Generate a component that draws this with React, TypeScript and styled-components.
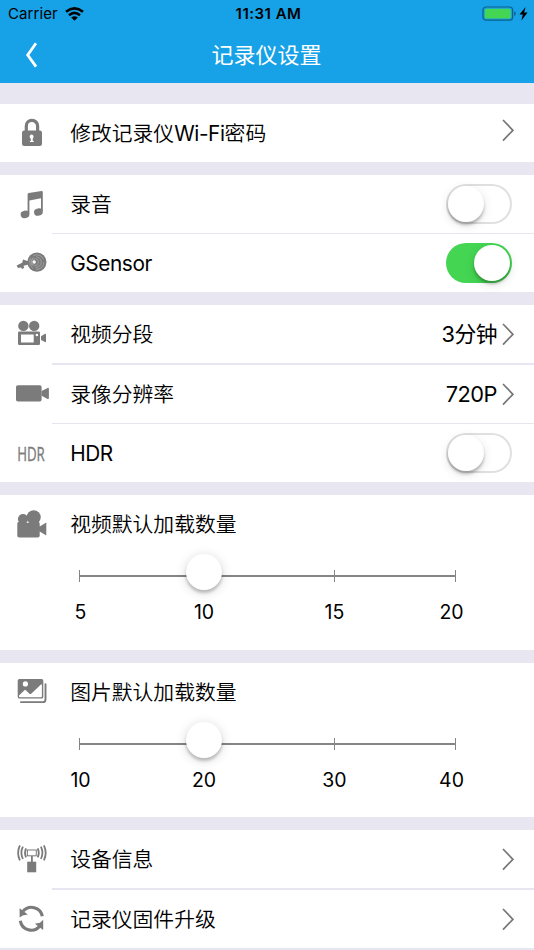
import React from 'react';
import styled, { createGlobalStyle } from 'styled-components';

const GlobalStyle = createGlobalStyle`
  * { box-sizing: border-box; }
  body {
    margin: 0;
    background: #e8e6f0;
    color: #000;
    font-family: Inter, "Noto Sans CJK SC", sans-serif;
    overflow: hidden;
  }
`;

const GRAY = '#7b7b7b';

const Screen = styled.main`
  width: 534px;
  height: 950px;
  overflow: hidden;
  display: flex;
  flex-direction: column;
`;

const Header = styled.header`
  flex: none;
  height: 83.4px;
  margin-bottom: 20.4px;
  background: #17a1e6;
`;

const StatusBar = styled.div`
  height: 27px;
  display: grid;
  grid-template-columns: 1fr auto 1fr;
  align-items: center;
  padding: 0 5px 0 8px;
  line-height: 27px;
`;

const Carrier = styled.div`
  display: flex;
  align-items: center;
  gap: 7px;
  font-size: 15px;
  letter-spacing: 0.1px;
`;

const Clock = styled.div`
  font-size: 15px;
  font-weight: 600;
  letter-spacing: 0.5px;
`;

const Power = styled.div`
  display: flex;
  justify-content: flex-end;
`;

const NavBar = styled.div`
  height: 56px;
  display: grid;
  grid-template-columns: 61px 1fr 62px;
  align-items: center;
`;

const BackButton = styled.button`
  border: 0;
  padding: 0 0 1px 24.5px;
  background: none;
  display: flex;
`;

const Title = styled.h1`
  margin: 0;
  text-align: center;
  color: #fff;
  font-size: 22px;
  line-height: 56px;
  font-weight: 400;
`;

const Group = styled.section<{ $height: number }>`
  flex: none;
  height: ${(p) => p.$height}px;
  margin-bottom: 12.8px;
  background: #fff;
  display: flex;
  flex-direction: column;
`;

const Row = styled.div`
  flex: 1;
  display: flex;
  align-items: center;
  padding-left: 14px;
`;

const Divider = styled.div`
  flex: none;
  height: 1.4px;
  margin-left: 52px;
  background: #e6e5f0;
`;

const IconSlot = styled.div`
  width: 36px;
  height: 36px;
  margin-right: 20.2px;
  display: flex;
  align-items: center;
  justify-content: center;
`;

const Label = styled.div<{ $tracking?: number }>`
  flex: 1;
  padding-top: 2px;
  font-size: 20.8px;
  line-height: 30px;
  letter-spacing: ${(p) => p.$tracking ?? 0}px;
  font-weight: 350;
  white-space: nowrap;
`;

const Latin = styled.span`
  font-weight: 400;
  letter-spacing: -0.4px;
`;

const Value = styled.div`
  font-size: 21.8px;
  line-height: 30px;
  letter-spacing: -0.5px;
  font-weight: 400;
  margin-right: 4px;
`;

const ChevronBox = styled.div<{ $lift?: number }>`
  display: flex;
  margin-right: 20px;
  padding-bottom: ${(p) => p.$lift ?? 0}px;
`;

const SwitchTrack = styled.div<{ $on?: boolean }>`
  width: 66px;
  height: 40px;
  margin-right: 22px;
  padding: 2px;
  border-radius: 20px;
  display: flex;
  justify-content: ${(p) => (p.$on ? 'flex-end' : 'flex-start')};
  background: ${(p) => (p.$on ? '#44d553' : '#fff')};
  box-shadow: ${(p) => (p.$on ? 'none' : 'inset 0 0 0 2px #e0e0e0')};
`;

const SwitchKnob = styled.div`
  width: 36px;
  height: 36px;
  border-radius: 50%;
  background: #fff;
  box-shadow: 0 3px 3px rgba(0, 0, 0, 0.24), 0 3px 11px rgba(0, 0, 0, 0.12);
`;

const SliderHeader = styled.div`
  height: 58.5px;
  display: flex;
  align-items: center;
  padding-left: 14px;
`;

const SliderTrack = styled.div`
  position: relative;
  width: 378px;
  height: 12px;
  margin: 16.8px 0 0 78.5px;
  display: grid;
  grid-template-columns: 125px 131px 121.5px;
`;

const TrackSegment = styled.div<{ $tick: boolean }>`
  border-right: ${(p) => (p.$tick ? `1.5px solid ${GRAY}` : '0')};
  background: linear-gradient(${GRAY}, ${GRAY}) 0 5px / 100% 2px no-repeat;
  opacity: 0.92;
  &:first-child { border-left: 1.5px solid ${GRAY}; }
`;

const SliderKnob = styled.div`
  position: absolute;
  left: 107.5px;
  top: -15.8px;
  width: 36px;
  height: 36px;
  border-radius: 50%;
  background: #fff;
  box-shadow: 0 3px 3px rgba(0, 0, 0, 0.2), 0 2px 12px rgba(0, 0, 0, 0.16);
`;

const Scale = styled.div`
  margin: 15px 0 0 20px;
  display: grid;
  grid-template-columns: 121px 126px 135px 99px;
  text-align: center;
  font-size: 19.5px;
  line-height: 30px;
`;

function Chevron({ lift }: { lift?: number }) {
  return (
    <ChevronBox $lift={lift}>
      <svg width="13" height="24" viewBox="0 0 13 24" fill="none" stroke="#777" strokeWidth="1.7">
        <path d="M2 2 11.9 12.3 2 22.6" />
      </svg>
    </ChevronBox>
  );
}

function Switch({ on }: { on?: boolean }) {
  return (
    <SwitchTrack $on={on} role="switch" aria-checked={!!on}>
      <SwitchKnob />
    </SwitchTrack>
  );
}

function Icon({ children }: { children: React.ReactNode }) {
  return (
    <IconSlot>
      <svg width="36" height="36" viewBox="0 0 36 36" fill={GRAY}>
        {children}
      </svg>
    </IconSlot>
  );
}

const LockIcon = () => (
  <Icon>
    <path d="M12.3 17V11a5.6 5.6 0 0 1 11.3 0V17" fill="none" stroke={GRAY} strokeWidth="3.2" />
    <rect x="8" y="15.4" width="20" height="15.6" rx="2.2" />
    <path d="M16 20.4a2 2 0 0 1 3.6 1.3c0 .8-.5 1.2-.8 1.6v2.6h1v1.2h-3.9v-1.2h.9v-2.4c-1.2-.8-1.4-2-.8-3.1Z" fill="#fff" />
  </Icon>
);

const MusicIcon = () => (
  <Icon>
    <path d="M13.6 8.3Q13.7 7.3 14.8 7L27.5 4.9Q28.8 4.8 28.8 6V25h-1.8V12.3L15.4 14.4V28h-1.8Z" />
    <ellipse cx="11" cy="28.4" rx="4.4" ry="3.7" transform="rotate(-12 11 28.4)" />
    <ellipse cx="24.4" cy="26" rx="4.4" ry="3.7" transform="rotate(-12 24.4 26)" />
  </Icon>
);

const SensorIcon = () => (
  <Icon>
    <circle cx="22.9" cy="17.1" r="9.6" />
    <g fill="none" stroke="#b5b5b5" strokeWidth=".6">
      <circle cx="22.7" cy="17.1" r="7.2" strokeDasharray="12 3" />
      <circle cx="22.1" cy="17.1" r="5.2" strokeDasharray="9 3" />
      <circle cx="21.1" cy="17.1" r="3.4" />
    </g>
    <circle cx="20.2" cy="17" r="1.7" fill="#fff" />
    <path d="M14.8 16.6 9 14.6 8.2 17.8 2.6 20.5 4 23l3-.6 1.1 1.5 2-1-.5-2.2 6-1.4Z" />
  </Icon>
);

const CineIcon = () => (
  <Icon>
    <circle cx="9.4" cy="9.9" r="5.2" />
    <circle cx="20.2" cy="9.9" r="5.2" />
    <path fillRule="evenodd" d="M5.3 15.6h19.4q1.3 0 1.3 1.3v10.8q0 1.3-1.3 1.3H5.3Q4 29 4 27.7V16.9q0-1.3 1.3-1.3ZM7 18.4v8.2h12.7v-8.2ZM21.6 19a1.3 1.3 0 1 0 2.6 0 1.3 1.3 0 0 0-2.6 0Z" />
    <path d="m27 20.2 4-2.5q1-.3 1 .6v7.3q0 .8-1 .5l-4-2.2Z" />
  </Icon>
);

const VideoIcon = () => (
  <Icon>
    <rect x="2" y="9.3" width="25.6" height="16.2" rx="1.8" />
    <path d="m27.6 15 6-3.1q1.3-.4 1.3.8v9.4q0 1.3-1.3.8l-6-3.2Z" />
  </Icon>
);

const FilmIcon = () => (
  <Icon>
    <circle cx="9" cy="13" r="5.1" />
    <circle cx="19.7" cy="11.2" r="7" />
    <path d="M5.3 15.8h18.5q1.9 0 1.9 1.8v2.8l6.6-3.9v13l-6.6-3.9v4.2q0 1.8-1.9 1.8H5.2q-1.9 0-1.9-1.8V17.6q0-1.8 2-1.8Z" />
    <path d="m12.2 16.8 1.4-1.4 1.8 1.4Z" fill="#fff" />
  </Icon>
);

const PhotosIcon = () => (
  <Icon>
    <path fillRule="evenodd" d="M5.4 5h22.2q1.7 0 1.7 1.7v16.2q0 1.7-1.7 1.7H5.4q-1.7 0-1.7-1.7V6.7Q3.7 5 5.4 5ZM5 22.4q0 .8.8.8h21.1q1 0 1-1v-11q0-1.4-1.2-.5l-9.5 9q-.8.8-1.7 0l-3.7-3.5q-.7-.7-1.4 0L5 21.6Z" />
    <circle cx="11.4" cy="9.9" r="2.6" fill="#fff" />
    <path d="M6.9 28.1h22q2.6 0 2.6-2.7V10.3" fill="none" stroke={GRAY} strokeWidth="1.9" strokeLinecap="round" />
  </Icon>
);

const AntennaIcon = () => (
  <Icon>
    <rect x="13.4" y="9" width="8.9" height="5.8" fill="none" stroke={GRAY} strokeWidth="1" />
    <rect x="17" y="15" width="1.8" height="6" />
    <rect x="13.2" y="20.7" width="9" height="10.6" />
    <path
      d="M12 7.4q-2 4.5 0 9M8.9 5.7q-3 6.2 0 12.2M5.9 4.4q-3.6 7.5 0 15M23.8 7.4q2 4.5 0 9M26.9 5.7q3 6.2 0 12.2M29.9 4.4q3.6 7.5 0 15"
      fill="none"
      stroke={GRAY}
      strokeWidth="1.8"
    />
  </Icon>
);

const RefreshIcon = () => (
  <Icon>
    <g fill="none" stroke={GRAY} strokeWidth="3.1">
      <path d="M9 10.3A11 11 0 0 1 28.3 15.3" />
      <path d="M6.3 19.8A11 11 0 0 0 25.8 25" />
    </g>
    <path d="M5.6 7.2 13.8 13.4 8.6 14.4 5.6 16.6Z" />
    <path d="M29.2 28.9 20.8 22.8 26 21.8 29.2 18.8Z" />
  </Icon>
);

const HdrBadge = styled.span`
  font-family: "Open Sans", sans-serif;
  font-size: 19.8px;
  color: ${GRAY};
  line-height: 36px;
  -webkit-text-stroke: 0.35px ${GRAY};
  transform: translate(-0.6px, 0.5px) scaleX(0.67);
`;

function CountSlider({ icon, label, values, height }: {
  icon: React.ReactNode; label: string; values: number[]; height: number;
}) {
  return (
    <Group $height={height}>
      <SliderHeader>
        {icon}
        <Label>{label}</Label>
      </SliderHeader>
      <SliderTrack>
        <TrackSegment $tick={false} />
        <TrackSegment $tick />
        <TrackSegment $tick />
        <SliderKnob />
      </SliderTrack>
      <Scale>
        {values.map((v) => <span key={v}>{v}</span>)}
      </Scale>
    </Group>
  );
}

export default function App() {
  return (
    <Screen>
      <GlobalStyle />
      <Header>
        <StatusBar>
          <Carrier>
            Carrier
            <svg width="19" height="14" viewBox="0 0 19 14" fill="none" stroke="#000" strokeWidth="2.6">
              <path d="M1 4.8Q9.5-1.9 18 4.8M4 8.2q5.5-4.5 11 0" />
              <path d="M6.2 10.5q3.3-2.6 6.6 0L9.5 13.8Z" fill="#000" stroke="none" />
            </svg>
          </Carrier>
          <Clock>11:31 AM</Clock>
          <Power>
            <svg width="47" height="16" viewBox="0 0 47 16">
              <rect x="1" y="1" width="29.6" height="13.2" rx="3" fill="none" stroke="#105f88" strokeWidth="1.2" />
              <rect x="2.8" y="2.8" width="26" height="9.6" rx="1.5" fill="#44d553" />
              <path d="M32.2 5.2q1.6.6 1.6 2.4t-1.6 2.4Z" fill="#105f88" />
              <path d="m43.6 1-6.1 7.5h3.3l-1.4 6 6.2-8h-3.5Z" />
            </svg>
          </Power>
        </StatusBar>
        <NavBar>
          <BackButton aria-label="返回">
            <svg width="12" height="26" viewBox="0 0 12 26" fill="none" stroke="#fff" strokeWidth="2.8">
              <path d="M11 1.3 2.7 13 11 24.6" />
            </svg>
          </BackButton>
          <Title>记录仪设置</Title>
        </NavBar>
      </Header>

      <Group $height={58.3}>
        <Row>
          <LockIcon />
          <Label>修改记录仪<Latin>Wi-Fi</Latin>密码</Label>
          <Chevron lift={6} />
        </Row>
      </Group>

      <Group $height={117.4}>
        <Row><MusicIcon /><Label>录音</Label><Switch /></Row>
        <Divider />
        <Row><SensorIcon /><Label><Latin>GSensor</Latin></Label><Switch on /></Row>
      </Group>

      <Group $height={177}>
        <Row><CineIcon /><Label>视频分段</Label><Value>3分钟</Value><Chevron /></Row>
        <Divider />
        <Row><VideoIcon /><Label>录像分辨率</Label><Value>720P</Value><Chevron /></Row>
        <Divider />
        <Row>
          <IconSlot><HdrBadge>HDR</HdrBadge></IconSlot>
          <Label><Latin>HDR</Latin></Label>
          <Switch />
        </Row>
      </Group>

      <CountSlider icon={<FilmIcon />} label="视频默认加载数量" values={[5, 10, 15, 20]} height={154.9} />
      <CountSlider icon={<PhotosIcon />} label="图片默认加载数量" values={[10, 20, 30, 40]} height={154.9} />

      <Group $height={117.4}>
        <Row><AntennaIcon /><Label>设备信息</Label><Chevron /></Row>
        <Divider />
        <Row><RefreshIcon /><Label>记录仪固件升级</Label><Chevron /></Row>
      </Group>
    </Screen>
  );
}
